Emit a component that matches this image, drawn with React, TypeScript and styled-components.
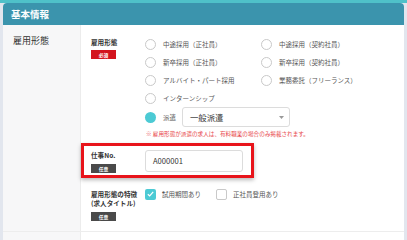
import styled, { createGlobalStyle } from 'styled-components';

const GlobalStyle = createGlobalStyle`
  body {
    margin: 0;
    background: #e2e6ee;
    font-family: "Noto Sans CJK JP", "Noto Sans", sans-serif;
    color: #333;
  }
`;

const TopBar = styled.div`
  height: 3px;
  background: #4fc1c9;
`;

const Card = styled.section`
  margin: 0 3px;
  background: #fff;
  border-radius: 4px 4px 0 0;
  overflow: hidden;
`;

const CardHeader = styled.h2`
  margin: 0;
  height: 22px;
  padding: 0 8px;
  background: #3b94ad;
  color: #fff;
  font-size: 9.5px;
  font-weight: 700;
  line-height: 22px;
`;

const Row = styled.div`
  display: grid;
  grid-template-columns: 78px 1fr;
  border-bottom: 1px solid #ededed;
`;

const RowLabel = styled.div`
  background: #f7f7f8;
  border-right: 1px solid #ececec;
  padding: 10px 10px;
  font-size: 9px;
  line-height: 12px;
  color: #333;
`;

const RowBody = styled.div`
  padding: 10px 0;
  display: flex;
  flex-direction: column;
  align-items: flex-start;
`;

const Field = styled.div<{ $highlight?: boolean }>`
  display: grid;
  grid-template-columns: 54px auto;
  align-items: start;
  ${({ $highlight }) =>
    $highlight
      ? `
    margin: 5px 0 10px;
    padding: 2.5px 8px 2px 7px;
    border: 3px solid #e8141b;
    box-shadow: 0 2px 4px rgba(0, 0, 0, 0.28);
  `
      : `
    padding-left: 10px;
  `}
`;

const SubLabel = styled.div`
  padding-top: 2.5px;
  font-size: 6.6px;
  font-weight: 700;
  line-height: 9px;
  color: #333;
`;

const Badge = styled.span<{ $required?: boolean }>`
  display: flex;
  align-items: center;
  justify-content: center;
  width: 25px;
  height: 9px;
  margin-top: 3.5px;
  background: ${({ $required }) => ($required ? '#d3141e' : '#4a4a4a')};
  color: #fff;
  font-size: 4.8px;
  font-weight: 700;
`;

const RadioGrid = styled.div`
  display: grid;
  grid-template-columns: 116px auto;
  grid-auto-rows: 18px;
`;

const Choice = styled.label`
  display: flex;
  align-items: center;
  gap: 7px;
  font-size: 6.5px;
  color: #555;
  white-space: nowrap;
`;

const RadioCircle = styled.span<{ $checked?: boolean }>`
  box-sizing: border-box;
  width: 11px;
  height: 11px;
  border-radius: 50%;
  border: ${({ $checked }) => ($checked ? 'none' : '1px solid #c9c9c9')};
  background: ${({ $checked }) => ($checked ? '#4ccad4' : '#fff')};
  flex: none;
`;

const DispatchRow = styled.div`
  display: flex;
  align-items: center;
  height: 20px;
`;

const Select = styled.div`
  box-sizing: border-box;
  display: flex;
  align-items: center;
  justify-content: space-between;
  width: 108px;
  height: 20px;
  margin-left: 6px;
  padding: 0 5px 0 7px;
  border: 1px solid #dcdcdc;
  border-radius: 3px;
  font-size: 8.4px;
  color: #333;
`;

const Note = styled.div`
  margin-top: 3px;
  padding-left: 1px;
  font-size: 5.6px;
  line-height: 8px;
  color: #e8474c;
  white-space: nowrap;
`;

const TextInput = styled.div`
  box-sizing: border-box;
  display: flex;
  align-items: center;
  width: 98px;
  height: 22px;
  padding: 0 7px;
  border: 1px solid #dcdcdc;
  border-radius: 3px;
  font-size: 7.6px;
  color: #333;
  align-self: center;
`;

const WideInput = styled.div`
  box-sizing: border-box;
  margin-left: 64px;
  width: 250px;
  height: 22px;
  border: 1px solid #dcdcdc;
  border-radius: 3px;
`;

const CheckRow = styled.div`
  display: flex;
  align-items: center;
  height: 13px;
`;

const CheckItem = styled.label`
  display: flex;
  align-items: center;
  gap: 6px;
  width: 71px;
  font-size: 6.5px;
  color: #555;
  white-space: nowrap;
`;

const CheckBox = styled.span<{ $checked?: boolean }>`
  box-sizing: border-box;
  display: flex;
  align-items: center;
  justify-content: center;
  width: 11px;
  height: 11px;
  border-radius: 2px;
  border: ${({ $checked }) => ($checked ? 'none' : '1px solid #c9c9c9')};
  background: ${({ $checked }) => ($checked ? '#4ccad4' : '#fff')};
  flex: none;
`;

const col1 = ['中途採用（正社員）', '新卒採用（正社員）', 'アルバイト・パート採用', 'インターンシップ'];
const col2 = ['中途採用（契約社員）', '新卒採用（契約社員）', '業務委託（フリーランス）'];

const radios: string[] = [];
for (let i = 0; i < 4; i++) {
  radios.push(col1[i]);
  radios.push(col2[i] ?? '');
}

const Radio = ({ label }: { label: string }) =>
  label ? (
    <Choice>
      <RadioCircle />
      {label}
    </Choice>
  ) : (
    <span />
  );

export default function App() {
  return (
    <>
      <GlobalStyle />
      <TopBar />
      <Card>
        <CardHeader>基本情報</CardHeader>
        <Row>
          <RowLabel>雇用形態</RowLabel>
          <RowBody>
            <Field>
              <div>
                <SubLabel>雇用形態</SubLabel>
                <Badge $required>必須</Badge>
              </div>
              <div>
                <RadioGrid>
                  {radios.map((r, i) => (
                    <Radio key={i} label={r} />
                  ))}
                </RadioGrid>
                <DispatchRow>
                  <Choice>
                    <RadioCircle $checked />
                    派遣
                  </Choice>
                  <Select>
                    一般派遣
                    <svg width="5" height="3" viewBox="0 0 5 3">
                      <path d="M0 0h5L2.5 3z" fill="#999" />
                    </svg>
                  </Select>
                </DispatchRow>
                <Note>※ 雇用形態が派遣の求人は、有料職業の場合のみ掲載されます。</Note>
              </div>
            </Field>

            <Field $highlight>
              <div>
                <SubLabel>仕事No.</SubLabel>
                <Badge>任意</Badge>
              </div>
              <TextInput>A000001</TextInput>
            </Field>

            <Field>
              <div>
                <SubLabel>
                  雇用形態の特徴
                  <br />
                  (求人タイトル)
                </SubLabel>
                <Badge>任意</Badge>
              </div>
              <CheckRow>
                <CheckItem>
                  <CheckBox $checked>
                    <svg width="7" height="6" viewBox="0 0 7 6">
                      <path d="M0.8 3.2L2.7 5L6.2 0.9" fill="none" stroke="#fff" strokeWidth="1.2" />
                    </svg>
                  </CheckBox>
                  試用期間あり
                </CheckItem>
                <CheckItem>
                  <CheckBox />
                  正社員登用あり
                </CheckItem>
              </CheckRow>
            </Field>
          </RowBody>
        </Row>
        <Row>
          <RowLabel>給与情報</RowLabel>
          <RowBody>
            <WideInput />
          </RowBody>
        </Row>
      </Card>
    </>
  );
}
